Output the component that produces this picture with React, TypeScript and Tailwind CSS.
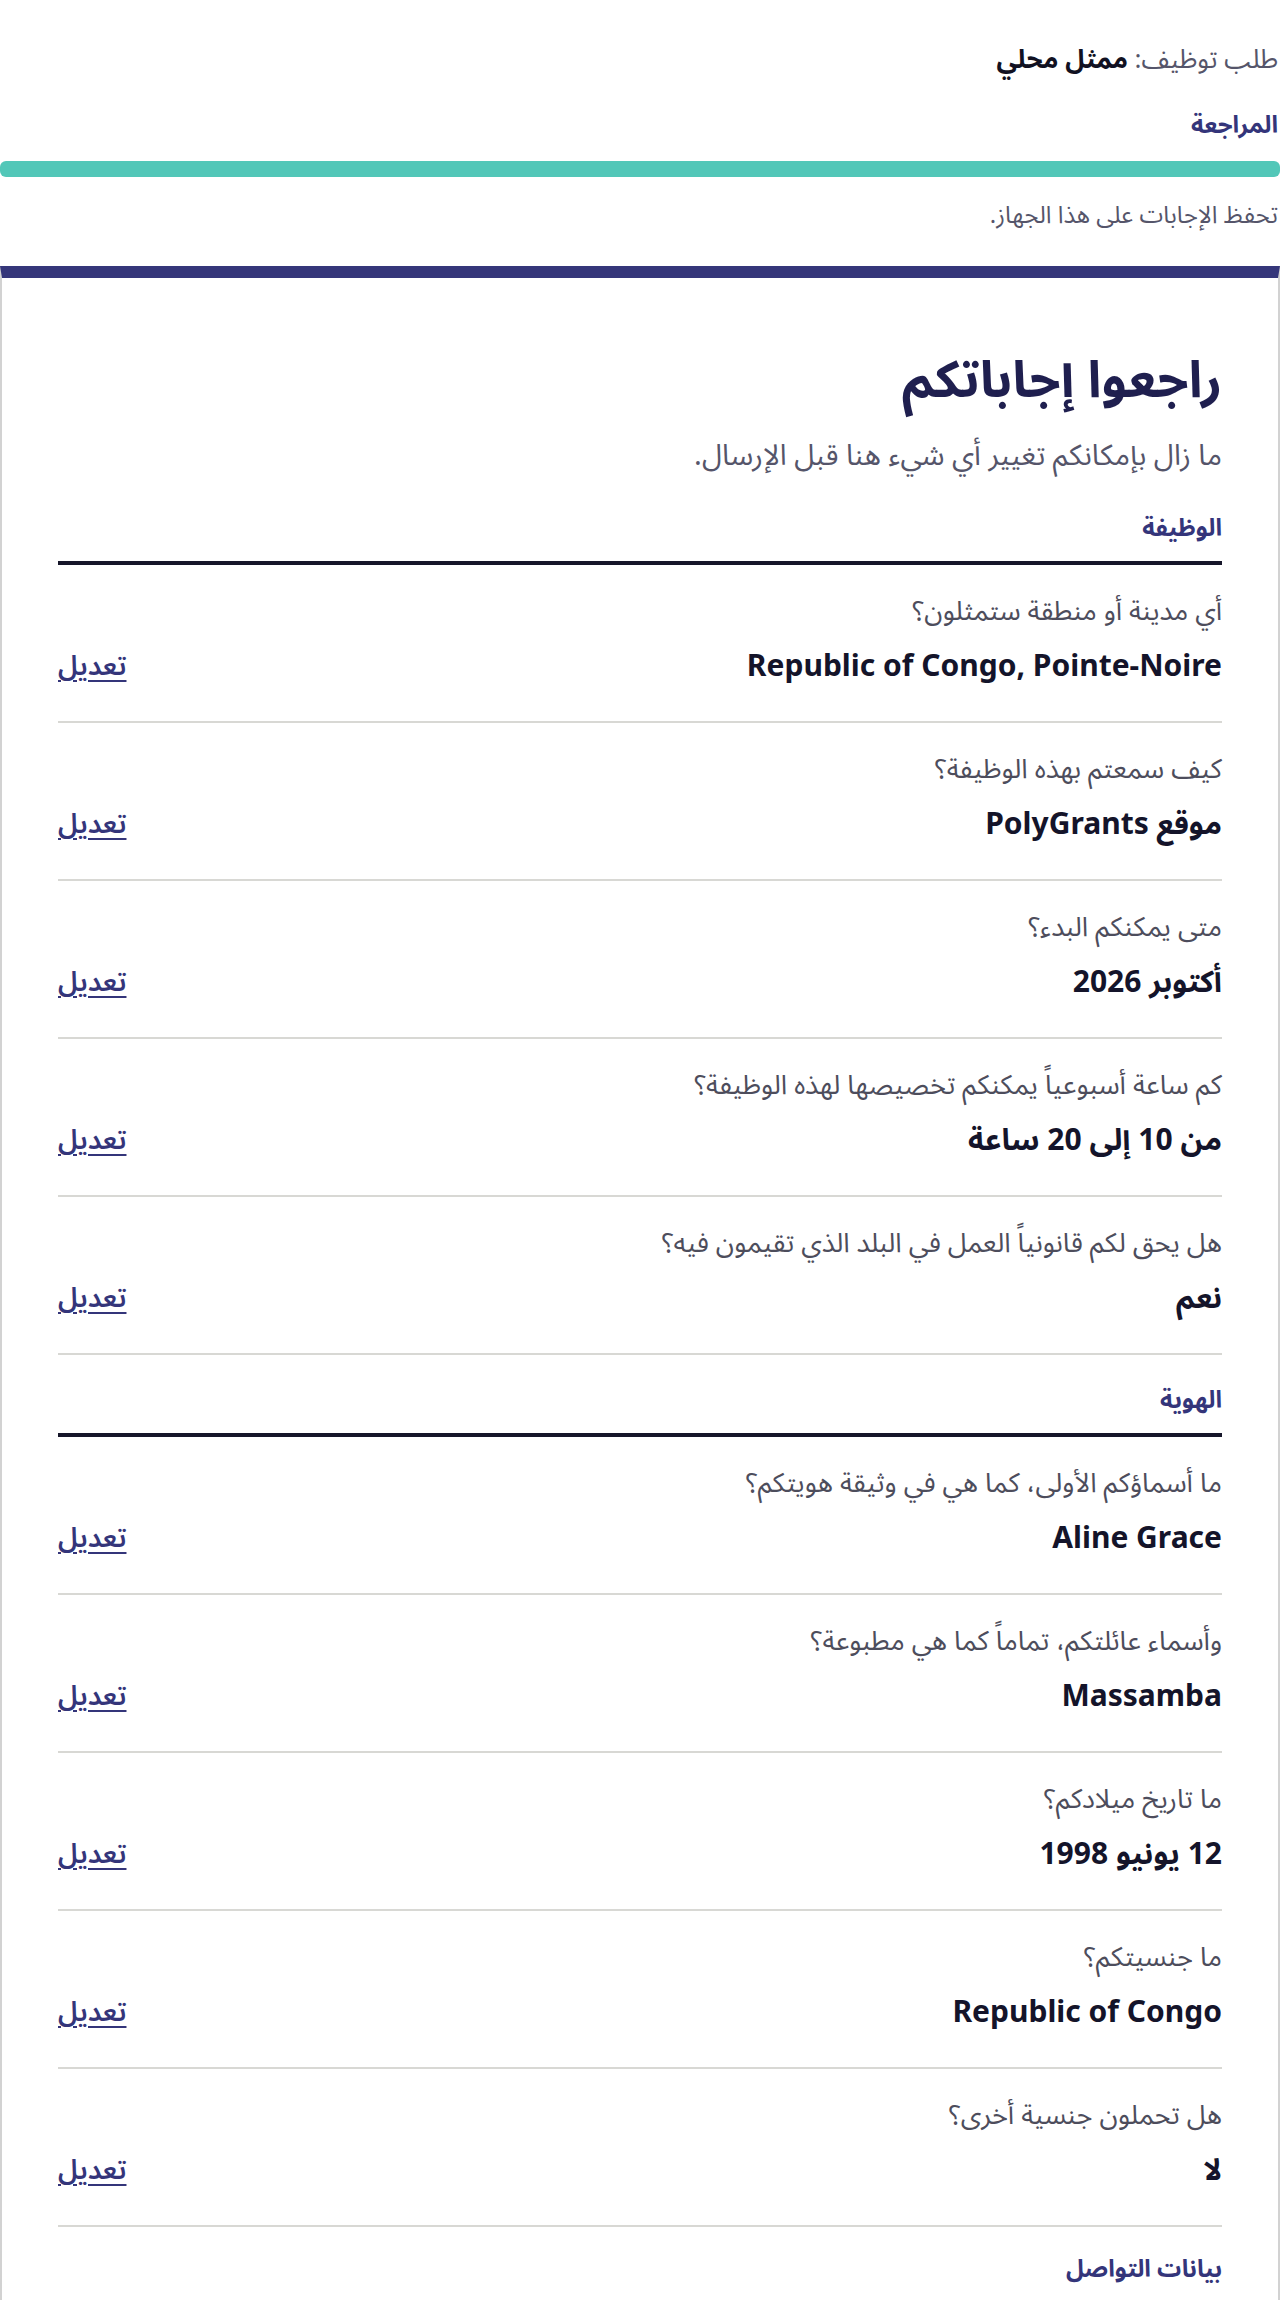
import React from "react";

type Row = { q: string; a: string };

const job: Row[] = [
  { q: "أي مدينة أو منطقة ستمثلون؟", a: "Republic of Congo, Pointe-Noire" },
  { q: "كيف سمعتم بهذه الوظيفة؟", a: "موقع PolyGrants" },
  { q: "متى يمكنكم البدء؟", a: "أكتوبر 2026" },
  { q: "كم ساعة أسبوعياً يمكنكم تخصيصها لهذه الوظيفة؟", a: "من 10 إلى 20 ساعة" },
  { q: "هل يحق لكم قانونياً العمل في البلد الذي تقيمون فيه؟", a: "نعم" },
];

const identity: Row[] = [
  { q: "ما أسماؤكم الأولى، كما هي في وثيقة هويتكم؟", a: "Aline Grace" },
  { q: "وأسماء عائلتكم، تماماً كما هي مطبوعة؟", a: "Massamba" },
  { q: "ما تاريخ ميلادكم؟", a: "12 يونيو 1998" },
  { q: "ما جنسيتكم؟", a: "Republic of Congo" },
  { q: "هل تحملون جنسية أخرى؟", a: "لا" },
];

function SectionHeading({ title, first }: { title: string; first?: boolean }) {
  return (
    <h3
      className={`${first ? "pt-[37px]" : "pt-[28px]"} pb-[18px] border-b-4 border-[#16162a] text-[24px] leading-[32px] font-bold text-[#34357a]`}
    >
      {title}
    </h3>
  );
}

function AnswerRow({ row }: { row: Row }) {
  return (
    <div className="pt-[27px] pb-[36px] border-b-2 border-[#d8d8d4]">
      <p className="text-[27px] leading-[36px] text-[#4d4d5c]">{row.q}</p>
      <div className="mt-[17px] flex items-center justify-between">
        <p className="text-[30px] leading-[40px] font-bold text-[#14142a]">{row.a}</p>
        <a
          href="#"
          className="text-[27px] leading-[36px] font-semibold text-[#34357a] underline underline-offset-[5px] decoration-2"
        >
          تعديل
        </a>
      </div>
    </div>
  );
}

export default function App() {
  return (
    <div
      dir="rtl"
      className="min-h-[2300px] bg-white"
      style={{ fontFamily: '"Noto Sans", "Noto Sans Arabic", "DejaVu Sans", sans-serif' }}
    >
      <header className="px-[2px] pt-[40px]">
        <p className="text-[26px] leading-[36px] text-[#55556a]">
          طلب توظيف: <span className="font-bold text-[#111122]">ممثل محلي</span>
        </p>
        <p className="mt-[30px] text-[24px] leading-[36px] font-bold text-[#34357a]">المراجعة</p>
      </header>

      <div className="mt-[19px] h-4 rounded-md bg-[#52c7b8]" />

      <p className="mt-[22px] px-[2px] text-[24px] leading-[30px] text-[#55556a]">
        تحفظ الإجابات على هذا الجهاز.
      </p>

      <main className="mt-[37px] border-t-[12px] border-x-2 border-t-[#35367a] border-x-[#d2d2d2] px-14">
        <h1 className="pt-[67px] text-[51px] leading-[64px] font-bold text-[#1f1f4f]">راجعوا إجاباتكم</h1>
        <p className="mt-[25px] text-[29px] leading-[40px] text-[#55556a]">
          ما زال بإمكانكم تغيير أي شيء هنا قبل الإرسال.
        </p>

        <SectionHeading title="الوظيفة" first />
        {job.map((r) => (
          <AnswerRow key={r.q} row={r} />
        ))}

        <SectionHeading title="الهوية" />
        {identity.map((r) => (
          <AnswerRow key={r.q} row={r} />
        ))}

        <h3 className="pt-[25px] pb-[40px] text-[24px] leading-[32px] font-bold text-[#34357a]">بيانات التواصل</h3>
      </main>
    </div>
  );
}
